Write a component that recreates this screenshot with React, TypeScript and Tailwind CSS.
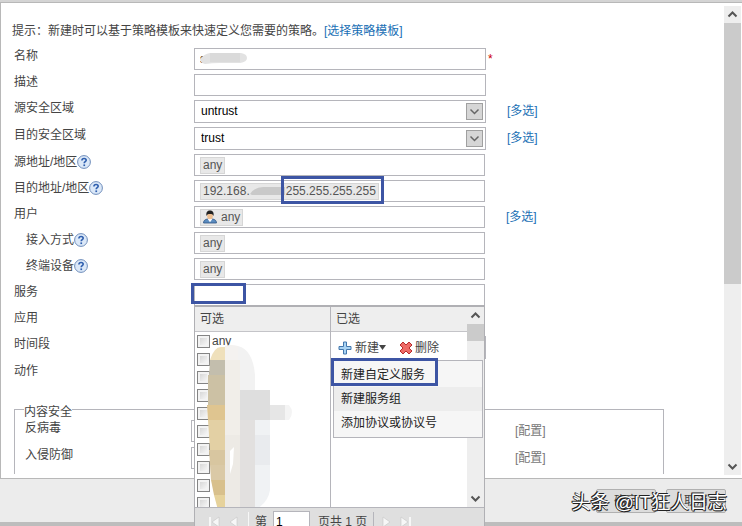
import type { ReactNode } from 'react';

const BOX = 'h-[22px] border border-[#b5b5bb] bg-white';
const SERVICE_ROWS = ['any', '', '', '', '', '', '', '', '', ''];
const NEW_MENU = ['新建自定义服务', '新建服务组', '添加协议或协议号'];

function HelpIcon() {
  return (
    <svg viewBox="0 0 14 14" className="h-3.5 w-3.5 shrink-0" aria-hidden="true">
      <circle cx="7" cy="7" r="6.4" fill="#dbe8f8" stroke="#6f8dba" />
      <path
        d="M4.900 5.600c0-1.400.9-2.100 2.200-2.100s2.100.7 2.100 1.800c0 1.400-2 1.500-2 3"
        fill="none"
        stroke="#2f5fae"
        strokeWidth="1.6"
      />
      <rect x="6.400" y="9.400" width="1.700" height="1.700" fill="#2f5fae" />
    </svg>
  );
}

function UserIcon() {
  return (
    <svg viewBox="0 0 14 14" className="h-3.5 w-3.5 shrink-0" aria-hidden="true">
      <path d="M.5 13c0-2.400 1.500-3.600 4-4h5c2.500.4 4 1.600 4 4z" fill="#5b8cc0" stroke="#2d5484" strokeWidth=".8" />
      <path d="M4.500 8.800h5L7 12.200z" fill="#fff" />
      <ellipse cx="7" cy="5.800" rx="2.900" ry="3.500" fill="#eebf92" />
      <path d="M3.500 6C2.800 2.200 4.600.6 7 .6S11.200 2.200 10.500 6C9.900 4.300 8.600 4 7 4S4.100 4.300 3.500 6z" fill="#222" />
    </svg>
  );
}

function Chevron({ up = false }: { up?: boolean }) {
  return (
    <svg viewBox="0 0 17 17" className="h-[17px] w-[17px] shrink-0" aria-hidden="true">
      <path d={up ? 'M4.500 10.500l4-4 4 4' : 'M4.500 6.500l4 4 4-4'} fill="none" stroke="#555" strokeWidth="2" />
    </svg>
  );
}

type RowProps = {
  id: string;
  label: string;
  help?: boolean;
  indent?: boolean;
  children?: ReactNode;
  extra?: boolean;
};

function Row({ id, label, help, indent, children, extra }: RowProps) {
  return (
    <div className="flex min-h-[22px] items-start">
      <label htmlFor={id} className={`flex w-[180px] shrink-0 items-center leading-4 ${indent ? 'pl-3' : ''}`}>
        {label}
        {help && <HelpIcon />}
      </label>
      {children}
      {extra && (
        <a href="#" className="ml-[21px] leading-[22px] text-[#1a6fb5]">
          [多选]
        </a>
      )}
    </div>
  );
}

function SelectBox({ id, value }: { id: string; value?: string }) {
  return (
    <div className="relative w-[292px]">
      <select
        id={id}
        defaultValue={value}
        className="block h-[23px] w-full appearance-none border border-[#b5b5bb] bg-white px-1.5 pb-0.5 text-black"
      >
        <option>{value}</option>
      </select>
      <span className="pointer-events-none absolute top-[3px] right-[3px] border border-[#a0a0a0] bg-[#d6d6d6]">
        <svg viewBox="0 0 15 15" className="h-[15px] w-[15px]" aria-hidden="true">
          <path d="M3.500 5.500l4 4 4-4" fill="none" stroke="#666" strokeWidth="1.500" />
        </svg>
      </span>
    </div>
  );
}

function TagBox({ id, children }: { id: string; children?: ReactNode }) {
  return (
    <div className={`${BOX} flex w-[291px] items-center px-[5px]`}>
      {children && (
        <span className="flex h-[17px] shrink-0 items-center border border-[#d6d6d6] bg-[#e8e8e8] px-0.5 text-[#555]">
          {children}
        </span>
      )}
      <input id={id} className="w-full min-w-0 outline-none" />
    </div>
  );
}

function Frame({ className }: { className: string }) {
  return <span className={`pointer-events-none absolute border-3 border-[#3d55a4] ${className}`} />;
}

function Redaction() {
  return (
    <svg viewBox="0 0 88 166" className="pointer-events-none absolute top-3 left-3 h-[166px] w-[88px]" aria-hidden="true">
      <path d="M3 16Q7 3 14 3h4v13z" fill="#efe0bb" />
      <path d="M18 2q6-2 13 0v14H18z" fill="#f4f2f0" />
      <path d="M31 2q15 4 17 29v30H33V16h-2z" fill="#f2f2f2" />
      <path d="M3 16h15v30H1q1-15 2-30z" fill="#c3bead" />
      <path d="M1 31h17v30H1z" fill="#ccc1a4" />
      <path d="M0 61h18v15H1z" fill="#dfc590" />
      <path d="M1 76h17v30H3z" fill="#e3d0a4" />
      <path d="M2 106h16v15H3z" fill="#d8c6a0" />
      <path d="M3 121h15v15H4z" fill="#dac9a6" />
      <path d="M4 136h14v15H7z" fill="#d8c08c" />
      <path d="M7 151h11v15h-7z" fill="#e6d29b" />
      <path d="M18 16h15v150H18z" fill="#f1eee9" />
      <path d="M18 91h15v75H18z" fill="#edeae5" />
      <path d="M33 46h15v120H33z" fill="#e2e0df" />
      <path d="M33 46h30v30H33z" fill="#dedede" />
      <path d="M48 76h15v70q-2 13-15 20z" fill="#f0f2f4" />
      <path d="M48 91h15v30H48z" fill="#e9ebee" />
      <path d="M63 61h15v15H63z" fill="#e6e6e6" />
      <path d="M78 61h4q6 7 0 15h-4z" fill="#f4f4f4" />
      <path d="M23 107l4-4-1 17-3 10z" fill="#fff" />
    </svg>
  );
}

function PageArrow({ bar, next }: { bar?: boolean; next?: boolean }) {
  return (
    <svg viewBox="0 0 14 12" className={`block h-3 w-3.5 ${next ? 'rotate-180' : ''}`} aria-hidden="true">
      {bar && <path d="M2 1v10" stroke="#f7f7f7" strokeWidth="2" />}
      <path d="M11 1v10L4 6z" fill="#f7f7f7" stroke="#c6c6c6" strokeWidth=".6" />
    </svg>
  );
}

function ServicePicker() {
  return (
    <div className="absolute top-[21px] left-0 z-10 w-[291px] border border-t-2 border-[#b0b0b4] bg-white">
      <div className="flex h-[200px]">
        <div className="relative w-[136px] shrink-0 overflow-hidden border-r border-[#b5b5bb]">
          <div className="h-[25px] border-b border-[#c4c4c8] bg-[#eee] px-[5px] leading-6">可选</div>
          <div className="relative px-0.5">
            {SERVICE_ROWS.map((name, i) => (
              <label key={i} className="flex h-[18px] items-center gap-0.5">
                <input
                  type="checkbox"
                  aria-label={name || `service ${i + 1}`}
                  className="h-[13px] w-[13px] appearance-none border border-[#848484] bg-linear-to-br from-[#cfcfcf] to-white shadow-[inset_0_0_0_2px_#f3f3f3]"
                />
                {name}
              </label>
            ))}
            <Redaction />
          </div>
        </div>
        <div className="relative min-w-0 flex-1">
          <div className="h-[25px] border-b border-[#c4c4c8] bg-[#eee] px-[5px] leading-6">已选</div>
          <div className="flex h-7 items-center px-[7px] pt-1">
            <button type="button" className="flex items-center gap-0.5">
              <svg viewBox="0 0 15 15" className="h-[15px] w-[15px]" aria-hidden="true">
                <path d="M5.500 1h3v4.500H13v3H8.500V13h-3V8.500H1v-3h4.500z" fill="#a9d3f3" stroke="#4377ad" />
              </svg>
              <span>新建</span>
              <svg viewBox="0 0 8 12" className="-ml-0.5 h-3 w-2" aria-hidden="true">
                <path d="M0 3h7L3.500 8z" fill="#444" />
              </svg>
            </button>
            <button type="button" className="ml-3 flex items-center gap-0.5">
              <svg viewBox="0 0 14 14" className="h-3.5 w-3.5" aria-hidden="true">
                <path d="M4 1l3 3 3-3 3 3-3 3 3 3-3 3-3-3-3 3-3-3 3-3-3-3z" fill="#ee6a66" stroke="#b82c2c" />
              </svg>
              删除
            </button>
          </div>
          <div className="absolute top-0 right-0 flex h-full w-[17px] flex-col bg-[#eee]">
            <Chevron up />
            <div className="h-[17px] bg-[#cbcbcb]" />
            <div className="flex-1" />
            <Chevron />
          </div>
          <div className="absolute top-[53px] left-0.5 w-[150px] border border-[#b5b5bb] bg-[#f6f6f6] py-0.5 text-[#222]">
            {NEW_MENU.map((item) => (
              <button
                key={item}
                type="button"
                className="block h-6 w-full px-[7px] text-left even:bg-[#ededed]"
              >
                {item}
              </button>
            ))}
            <Frame className="-top-[3px] -left-[3px] h-7 w-[107px]" />
          </div>
        </div>
      </div>
      <div className="flex h-7 items-center border-t border-[#b5b5bb] bg-[#dfdfdf] pl-[13px]">
        <button type="button" aria-label="首页"><PageArrow bar /></button>
        <button type="button" aria-label="上一页" className="ml-1"><PageArrow /></button>
        <span className="ml-2 h-5 w-px bg-[#f7f7f7]" />
        <label htmlFor="page" className="ml-1.5">第</label>
        <input id="page" defaultValue="1" className="ml-1.5 h-[22px] w-[37px] border border-[#b5b5bb] bg-white px-0.5 text-black" />
        <span className="ml-2">页共 1 页</span>
        <span className="ml-1.5 h-5 w-px bg-[#b5b5bb]" />
        <button type="button" aria-label="下一页" className="ml-1.5"><PageArrow next /></button>
        <button type="button" aria-label="末页" className="ml-1"><PageArrow bar next /></button>
      </div>
    </div>
  );
}

export default function App() {
  return (
    <div className="flex h-screen flex-col overflow-hidden bg-[#ececec] font-['Liberation_Sans','Noto_Sans_CJK_SC',sans-serif] text-xs text-[#444]">
      <div className="h-[3px] shrink-0 border-b border-[#b8b8b8] bg-[#d4d4d4]" />
      <main className="relative flex min-h-0 flex-1 border-b border-l border-[#b8b8b8] bg-white">
        <form className="min-w-0 flex-1 pt-5 pl-[13px]">
          <p className="-ml-0.5 pb-[9px] leading-4">
            提示：新建时可以基于策略模板来快速定义您需要的策略。
            <a href="#" className="text-[#1a6fb5]">[选择策略模板]</a>
          </p>
          <div className="flex flex-col gap-1">
            <Row id="name" label="名称">
              <div className="relative">
                <input id="name" defaultValue="s" className={`${BOX} w-[292px] px-[5px] text-black`} />
                <svg viewBox="0 0 48 14" className="absolute top-1 left-1.5 h-3.5 w-12" aria-hidden="true">
                  <path d="M0 7q4-5 10-6h31q6 1 6 5t-7 5H20q-8 0-15 1-5-1-5-5z" fill="#e2e2e2" />
                  <path d="M10 1h30v9H10z" fill="#dadada" />
                </svg>
              </div>
              <span className="ml-0.5 leading-[22px] text-[#c00]">*</span>
            </Row>
            <Row id="desc" label="描述">
              <input id="desc" className={`${BOX} w-[292px] px-1.5`} />
            </Row>
            <Row id="src-zone" label="源安全区域" extra>
              <SelectBox id="src-zone" value="untrust" />
            </Row>
            <Row id="dst-zone" label="目的安全区域" extra>
              <SelectBox id="dst-zone" value="trust" />
            </Row>
            <Row id="src-addr" label="源地址/地区" help>
              <TagBox id="src-addr">any</TagBox>
            </Row>
            <Row id="dst-addr" label="目的地址/地区" help>
              <div className="relative">
                <TagBox id="dst-addr">
                  <span>192.168.</span>
                  <svg viewBox="0 0 36 12" className="h-3 w-9" aria-hidden="true">
                    <path d="M0 9q5-7 13-7h22v8H2z" fill="#c9c9c9" />
                  </svg>
                  <span>255.255.255.255</span>
                </TagBox>
                <Frame className="-top-1 left-[87px] h-7 w-[103px]" />
              </div>
            </Row>
            <Row id="user" label="用户" extra>
              <TagBox id="user">
                <UserIcon />
                <span className="ml-1">any</span>
              </TagBox>
            </Row>
            <Row id="access" label="接入方式" help indent>
              <TagBox id="access">any</TagBox>
            </Row>
            <Row id="device" label="终端设备" help indent>
              <TagBox id="device">any</TagBox>
            </Row>
            <Row id="service" label="服务">
              <div className="relative">
                <TagBox id="service" />
                <ServicePicker />
                <Frame className="-top-px -left-[3px] z-20 h-[21px] w-[55px]" />
              </div>
            </Row>
            <Row id="app" label="应用">
              <TagBox id="app" />
            </Row>
            <Row id="schedule" label="时间段">
              <SelectBox id="schedule" />
            </Row>
            <Row id="action" label="动作" />
          </div>
          <fieldset className="mt-[19px] mr-[60px] h-[70px] border border-b-0 border-[#b5b5bb] pl-2.5">
            <legend className="mb-1.5 -ml-px h-2.5 leading-4">内容安全</legend>
            {[
              ['antivirus', '反病毒'],
              ['ips', '入侵防御'],
            ].map(([id, label]) => (
              <div key={id} className="flex h-[27px] items-start">
                <label htmlFor={id} className="w-[166px] leading-4">{label}</label>
                <div className="h-[22px] w-[294px] border border-[#b5b5bb]">
                  <input id={id} className="w-full outline-none" />
                </div>
                <a href="#" className="ml-[30px] leading-[22px] text-[#777]">[配置]</a>
              </div>
            ))}
          </fieldset>
        </form>
        <div className="mt-[3px] mr-px mb-[3px] flex w-[17px] flex-col bg-[#eee]">
          <Chevron up />
          <div className="h-[261px] bg-[#cbcbcb]" />
          <div className="flex-1" />
          <Chevron />
        </div>
      </main>
      <footer className="relative flex h-[47px] shrink-0 items-start justify-end gap-2.5 border-b-4 border-[#bdbdbd] px-4 pt-2.5">
        <button type="button" className="h-6 w-[60px] rounded-xs border border-[#b0b0b0] bg-[#dcdcdc]">确定</button>
        <button type="button" className="h-6 w-[60px] rounded-xs border border-[#b0b0b0] bg-[#dcdcdc]">取消</button>
        <span className="absolute top-2.5 right-[15px] text-[19px] leading-7 whitespace-nowrap text-white [text-shadow:-1px_-1px_0_#222,1px_1px_0_#222,-1px_0_0_#222,0_1px_0_#222]">
          头条 @IT狂人日志
        </span>
      </footer>
    </div>
  );
}
